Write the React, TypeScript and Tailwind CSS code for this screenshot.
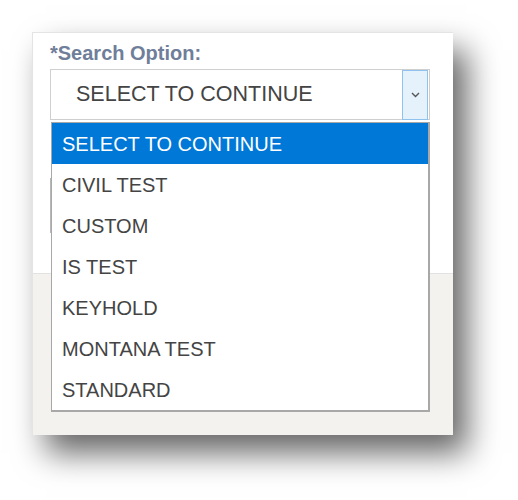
import React from 'react'

const options = ['SELECT TO CONTINUE', 'CIVIL TEST', 'CUSTOM', 'IS TEST', 'KEYHOLD', 'MONTANA TEST', 'STANDARD']

export default function App() {
  return (
    <div className="w-[518px] h-[500px] bg-white pt-8 pl-8 font-['Liberation_Sans',Arial,sans-serif]">
      {/* form card with the open dropdown on top */}
      <div className="relative w-[421px] h-[403px] flex flex-col bg-white border-l border-t border-[#e4e4e4] shadow-[14px_18px_30px_rgba(0,0,0,0.6)]">
        <div className="flex-1 flex flex-col pl-[17px] pt-[8px]">
          <label className="text-[20px] font-bold text-[#6f7e99] leading-6">*Search Option:</label>
          <div className="mt-[4px] w-[380px] h-[51px] flex items-center border border-[#cfcfcf] bg-white">
            <span className="flex-1 pl-[25px] text-[21.5px] text-[#444]">SELECT TO CONTINUE</span>
            <div className="w-[26px] h-[50px] mr-[1px] flex items-center justify-center bg-[#e5f1fb] border border-[#8fc3ee]">
              <svg width="9" height="6" viewBox="0 0 9 6">
                <path d="M1 1l3.5 3.5L8 1" fill="none" stroke="#555" strokeWidth="1.4" />
              </svg>
            </div>
          </div>
          {/* field hidden behind the list */}
          <div className="mt-[58px] w-[380px] h-[55px] border border-[#b8b8b8]" />
        </div>
        <div className="h-[162px] bg-[#f3f2ee] border-t border-[#e2e2e2]" />

        <ul className="absolute left-[18px] top-[89px] w-[379px] bg-white border border-[#a8a8a8] border-r-2 border-b-2">
          {options.map((o, i) => (
            <li
              key={o}
              className={
                i === 0
                  ? 'h-[41px] flex items-center pl-[10px] text-[20px] bg-[#0078d7] text-white'
                  : 'h-[41px] flex items-center pl-[10px] text-[20px] text-[#444]'
              }
            >
              {o}
            </li>
          ))}
        </ul>
      </div>
    </div>
  )
}
